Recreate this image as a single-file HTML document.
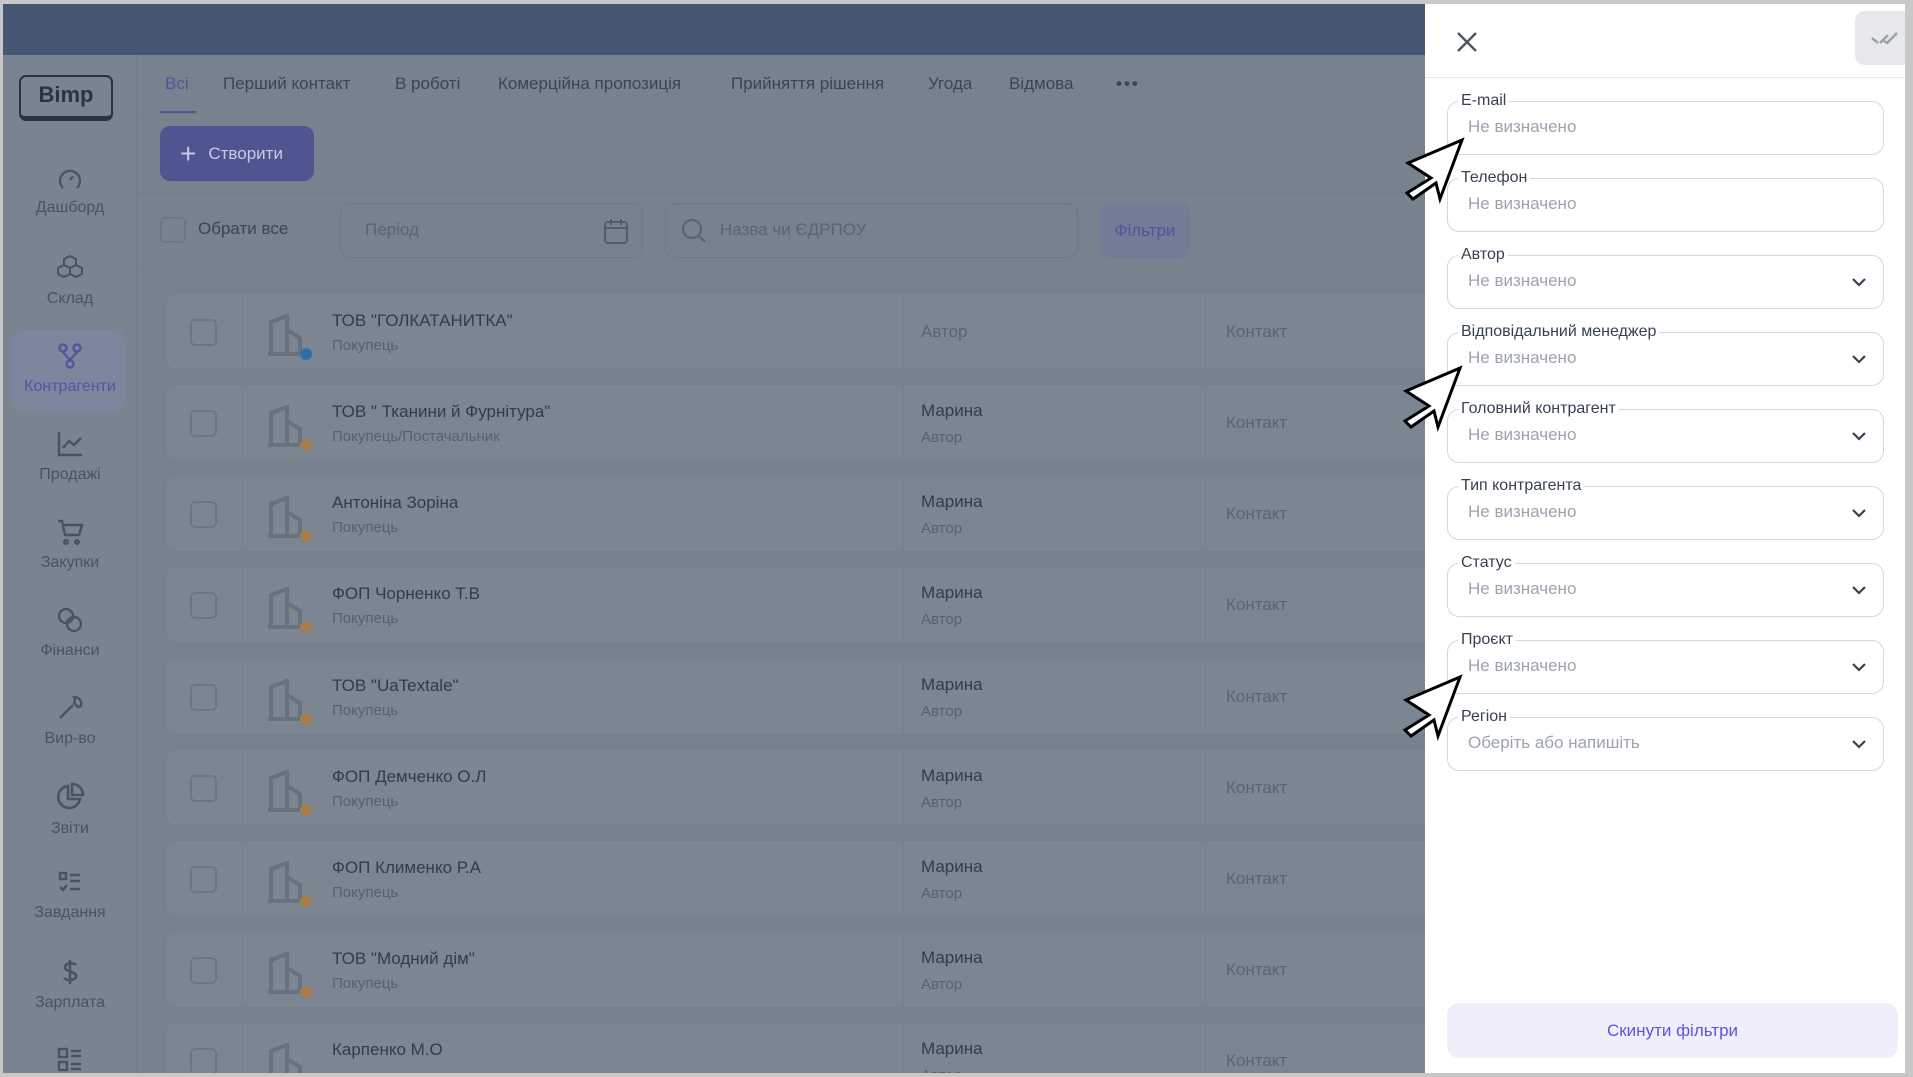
<!DOCTYPE html>
<html><head><meta charset="utf-8">
<style>
*{margin:0;padding:0;box-sizing:border-box}
body{width:1913px;height:1077px;overflow:hidden;background:#c8c8c8;font-family:"Liberation Sans",sans-serif;position:relative}
.abs{position:absolute}
#app{position:absolute;left:3px;top:4px;width:1902px;height:1069px;background:#78828f;overflow:hidden}
.top{left:0;top:0;width:1422px;height:51px;background:#475673}
.side{left:0;top:51px;width:134px;height:1018px;background:#7a8491;border-right:1px solid #737d8a}
.si{position:absolute;left:0;width:134px;text-align:center;font-size:16px;color:#4a5261}
.si svg{display:block;margin:0 auto 8px}
.tab{position:absolute;top:70px;font-size:17px;color:#3c4452}
.row{position:absolute;left:162px;width:1300px;height:77px;background:#7c8693;border:1px solid #76808d;border-radius:12px}
.row .c1{position:absolute;left:76px;top:0;height:100%;border-left:1px solid #76808d}
.row .c2{position:absolute;left:737px;top:0;height:100%;border-left:1px solid #76808d}
.row .c3{position:absolute;left:1039px;top:0;height:100%;border-left:1px solid #76808d}
.cb{position:absolute;left:24px;top:25px;width:27px;height:27px;border:2px solid #6d7683;border-radius:5px}
.nm{position:absolute;left:166px;top:17px;font-size:17px;color:#333b47}
.sub{position:absolute;left:166px;top:43px;font-size:15px;color:#58606d}
.au{position:absolute;left:755px;font-size:17px}
.ct{position:absolute;left:1060px;top:28px;font-size:17px;color:#5b6370}
.panel{left:1422px;top:0;width:480px;height:1069px;background:#fff}
.fld{position:absolute;left:22px;width:437px;height:54px;border:1px solid #d4d6db;border-radius:12px}
.fld .lb{position:absolute;left:10px;top:-10px;background:#fff;padding:0 3px;font-size:16px;color:#374151;line-height:18px}
.fld .ph{position:absolute;left:20px;top:15px;font-size:17px;color:#9ca3af}
.fld svg{position:absolute;right:16px;top:20px}
</style></head><body>
<div id="app">
<div class="abs top"></div>
<div class="abs side">
 <div class="abs" style="left:16px;top:20px;width:94px;height:46px;border:2px solid #2c3340;border-bottom-width:5px;border-radius:7px;text-align:center;font-weight:bold;font-size:22px;line-height:36px;color:#2c3340">Bimp</div>
 <div class="abs" style="left:9px;top:275px;width:113px;height:82px;background:#7d869c;border-radius:10px"></div>
</div>
<div class="si" style="top:163px"><svg width="26" height="24" viewBox="0 0 26 24" fill="none" stroke="#4a5261" stroke-width="2.2"><path d="M6 21A10 10 0 1 1 20 21"/><path d="M13 13l3-4"/></svg>Дашборд</div>
<div class="si" style="top:250px"><svg width="28" height="28" viewBox="0 0 28 28" fill="none" stroke="#4a5261" stroke-width="2"><path d="M14 2l6 3v6l-6 3-6-3V5z M8 11l6 3v6l-6 3-6-3v-6z M20 11l6 3v6l-6 3-6-3v-6z"/></svg>Склад</div>
<div class="si" style="top:338px;color:#5056a0"><svg width="26" height="28" viewBox="0 0 26 28" fill="none" stroke="#5056a0" stroke-width="2.4"><circle cx="6" cy="6" r="3.5"/><circle cx="20" cy="6" r="3.5"/><circle cx="13" cy="22" r="3.5"/><path d="M6 10l7 8 7-8"/></svg>Контрагенти</div>
<div class="si" style="top:426px"><svg width="28" height="28" viewBox="0 0 28 28" fill="none" stroke="#4a5261" stroke-width="2.4"><path d="M3 2v23h23M7 18l6-7 5 4 7-7"/></svg>Продажі</div>
<div class="si" style="top:514px"><svg width="28" height="28" viewBox="0 0 28 28" fill="none" stroke="#4a5261" stroke-width="2.4"><path d="M2 3h4l3 14h14l3-10H8"/><circle cx="10" cy="24" r="1.8"/><circle cx="21" cy="24" r="1.8"/></svg>Закупки</div>
<div class="si" style="top:602px"><svg width="28" height="28" viewBox="0 0 28 28" fill="none" stroke="#4a5261" stroke-width="2.4"><circle cx="10" cy="10" r="7"/><circle cx="18" cy="18" r="7"/></svg>Фінанси</div>
<div class="si" style="top:690px"><svg width="28" height="28" viewBox="0 0 28 28" fill="none" stroke="#4a5261" stroke-width="2.4"><path d="M18 3a7 7 0 0 1 7 9l-3 1-4-4 1-3zM17 11L4 24"/></svg>Вир-во</div>
<div class="si" style="top:778px"><svg width="30" height="30" viewBox="0 0 30 30" fill="none" stroke="#4a5261" stroke-width="2.6"><path d="M13 4a11 11 0 1 0 12 13H13z"/><path d="M17 2a11 11 0 0 1 11 11H17z"/></svg>Звіти</div>
<div class="si" style="top:866px"><svg width="26" height="26" viewBox="0 0 26 26" fill="none" stroke="#4a5261" stroke-width="2.4"><rect x="3" y="3" width="6" height="6"/><path d="M13 5h10M13 11h10M3 17l3 3 4-5M13 19h10"/></svg>Завдання</div>
<div class="si" style="top:954px"><svg width="26" height="28" viewBox="0 0 26 28" fill="none" stroke="#4a5261" stroke-width="2.6"><path d="M13 2v24M19 7c-2-2-10-3-11 2s11 4 11 9-9 5-12 2"/></svg>Зарплата</div>
<div class="si" style="top:1042px"><svg width="28" height="28" viewBox="0 0 28 28" fill="none" stroke="#4a5261" stroke-width="2.4"><rect x="3" y="3" width="8" height="8"/><rect x="3" y="16" width="8" height="8"/><path d="M15 5h10M15 10h10M15 18h10M15 23h10"/></svg></div>

<div class="tab" style="left:162px;color:#4f559a">Всі</div>
<div class="abs" style="left:157px;top:107px;width:36px;height:3px;background:#4f559a"></div>
<div class="tab" style="left:220px">Перший контакт</div>
<div class="tab" style="left:392px">В роботі</div>
<div class="tab" style="left:495px">Комерційна пропозиція</div>
<div class="tab" style="left:728px">Прийняття рішення</div>
<div class="tab" style="left:925px">Угода</div>
<div class="tab" style="left:1006px">Відмова</div>
<div class="tab" style="left:1113px;letter-spacing:2px;font-weight:bold">•••</div>
<div class="abs" style="left:134px;top:109px;width:1290px;height:1px;background:#737d8a"></div>
<div class="abs" style="left:157px;top:122px;width:154px;height:55px;background:#4f5591;border-radius:10px;color:#c9cbe6;font-size:17px;line-height:55px;padding-left:20px"><span style="font-size:28px;vertical-align:-4px;margin-right:12px">+</span>Створити</div>
<div class="abs" style="left:134px;top:188px;width:1290px;height:1px;background:#737d8a"></div>
<div class="abs" style="left:157px;top:213px;width:26px;height:26px;border:2px solid #6d7683;border-radius:5px"></div>
<div class="abs" style="left:195px;top:215px;font-size:17px;color:#3c4452">Обрати все</div>
<div class="abs" style="left:337px;top:199px;width:303px;height:55px;border:1px solid #6f7986;border-radius:10px"><span class="abs" style="left:24px;top:16px;font-size:17px;color:#5b6370">Період</span>
<svg class="abs" style="left:262px;top:13px" width="26" height="28" viewBox="0 0 26 28" fill="none" stroke="#545c69" stroke-width="2"><rect x="2" y="5" width="22" height="21" rx="3"/><path d="M2 11h22M8 2v6M18 2v6"/></svg></div>
<div class="abs" style="left:662px;top:199px;width:413px;height:55px;border:1px solid #6f7986;border-radius:10px"><svg class="abs" style="left:14px;top:13px" width="28" height="28" viewBox="0 0 28 28" fill="none" stroke="#5b6370" stroke-width="2.2"><circle cx="12" cy="12" r="9"/><path d="M19 19l6 6"/></svg><span class="abs" style="left:54px;top:16px;font-size:17px;color:#5b6370">Назва чи ЄДРПОУ</span></div>
<div class="abs" style="left:1097px;top:199px;width:90px;height:55px;background:#747b97;border-radius:10px;color:#4f559a;font-size:17px;line-height:55px;text-align:center">Фільтри</div>
<div class="abs" style="left:134px;top:265px;width:1290px;height:1px;background:#737d8a"></div>

<div class="row" style="top:289px"><div class="c1"></div><div class="c2"></div><div class="c3"></div><div class="cb"></div>
<svg class="abs" style="left:98px;top:20px" width="50" height="46" viewBox="0 0 50 46"><path d="M4 40h36M7 40V8l16-6v38M23 16l13 8v16" fill="none" stroke="#68717e" stroke-width="4"/><circle cx="42" cy="40" r="6" fill="#2f6fa8"/></svg>
<div class="nm">ТОВ "ГОЛКАТАНИТКА"</div><div class="sub">Покупець</div><div class="au" style="top:28px;color:#5b6370">Автор</div><div class="ct">Контакт</div></div>

<div id="rows"></div>
<script>
var d=[["ТОВ \" Тканини й Фурнітура\"","Покупець/Постачальник"],["Антоніна Зоріна","Покупець"],["ФОП Чорненко Т.В","Покупець"],["ТОВ \"UaTextale\"","Покупець"],["ФОП Демченко О.Л","Покупець"],["ФОП Клименко Р.А","Покупець"],["ТОВ \"Модний дім\"","Покупець"],["Карпенко М.О",""]];
var h="";d.forEach(function(r,i){var t=380+i*91.2;h+='<div class="row" style="top:'+t+'px"><div class="c1"></div><div class="c2"></div><div class="c3"></div><div class="cb"></div><svg class="abs" style="left:98px;top:20px" width="50" height="46" viewBox="0 0 50 46"><path d="M4 40h36M7 40V8l16-6v38M23 16l13 8v16" fill="none" stroke="#68717e" stroke-width="4"/><circle cx="42" cy="40" r="6" fill="#a87b4c"/></svg><div class="nm">'+r[0]+'</div><div class="sub">'+r[1]+'</div><div class="au" style="top:16px;color:#333b47">Марина</div><div class="au" style="top:44px;font-size:15px;color:#58606d">Автор</div><div class="ct">Контакт</div></div>';});
document.getElementById("rows").innerHTML=h;
</script>

<div class="abs panel">
 <svg class="abs" style="left:30px;top:26px" width="24" height="24" viewBox="0 0 24 24" stroke="#4b5563" stroke-width="2.4"><path d="M3 3l18 18M21 3L3 21"/></svg>
 <div class="abs" style="left:430px;top:7px;width:60px;height:54px;background:#e7e8eb;border-radius:10px"></div>
 <svg class="abs" style="left:445px;top:24px" width="30" height="20" viewBox="0 0 30 20" fill="none" stroke="#9aa0a8" stroke-width="2.4"><path d="M2 10l6 5M10 15l8-8M14 13l3 2 10-10"/></svg>
 <div class="abs" style="left:0;top:73px;width:480px;height:1px;background:#e5e7eb"></div>
 <div class="fld" style="top:97px"><span class="lb">E-mail</span><span class="ph">Не визначено</span></div>
 <div class="fld" style="top:174px"><span class="lb">Телефон</span><span class="ph">Не визначено</span></div>
 <div class="fld" style="top:251px"><span class="lb">Автор</span><span class="ph">Не визначено</span><svg width="16" height="12" viewBox="0 0 16 12"><path d="M2 3l6 6 6-6" fill="none" stroke="#374151" stroke-width="2.2"/></svg></div>
 <div class="fld" style="top:328px"><span class="lb">Відповідальний менеджер</span><span class="ph">Не визначено</span><svg width="16" height="12" viewBox="0 0 16 12"><path d="M2 3l6 6 6-6" fill="none" stroke="#374151" stroke-width="2.2"/></svg></div>
 <div class="fld" style="top:405px"><span class="lb">Головний контрагент</span><span class="ph">Не визначено</span><svg width="16" height="12" viewBox="0 0 16 12"><path d="M2 3l6 6 6-6" fill="none" stroke="#374151" stroke-width="2.2"/></svg></div>
 <div class="fld" style="top:482px"><span class="lb">Тип контрагента</span><span class="ph">Не визначено</span><svg width="16" height="12" viewBox="0 0 16 12"><path d="M2 3l6 6 6-6" fill="none" stroke="#374151" stroke-width="2.2"/></svg></div>
 <div class="fld" style="top:559px"><span class="lb">Статус</span><span class="ph">Не визначено</span><svg width="16" height="12" viewBox="0 0 16 12"><path d="M2 3l6 6 6-6" fill="none" stroke="#374151" stroke-width="2.2"/></svg></div>
 <div class="fld" style="top:636px"><span class="lb">Проєкт</span><span class="ph">Не визначено</span><svg width="16" height="12" viewBox="0 0 16 12"><path d="M2 3l6 6 6-6" fill="none" stroke="#374151" stroke-width="2.2"/></svg></div>
 <div class="fld" style="top:713px"><span class="lb">Регіон</span><span class="ph">Оберіть або напишіть</span><svg width="16" height="12" viewBox="0 0 16 12"><path d="M2 3l6 6 6-6" fill="none" stroke="#374151" stroke-width="2.2"/></svg></div>
 <div class="abs" style="left:22px;top:999px;width:451px;height:55px;background:#efeffc;border-radius:12px;text-align:center;line-height:55px;font-size:17px;color:#5b54e0">Скинути фільтри</div>
</div>
</div>
<svg class="abs" style="left:0;top:0" width="1913" height="1077">
 <g fill="#fff" stroke="#000" stroke-width="3" stroke-linejoin="miter">
 <path d="M1462 140L1408 163L1431 178L1407 193L1413 199L1436 183L1440 199Z"/>
 <path d="M1460 368L1406 391L1429 406L1405 421L1411 427L1434 411L1438 427Z"/>
 <path d="M1460 677L1406 700L1429 715L1405 730L1411 736L1434 720L1438 736Z"/>
 </g>
</svg>
</body></html>
